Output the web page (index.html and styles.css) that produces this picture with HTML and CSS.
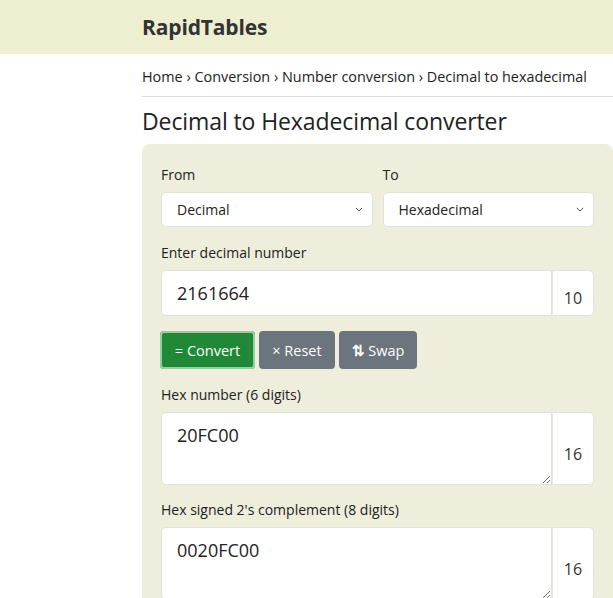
FILE: index.html
```html
<!DOCTYPE html>
<html lang="en">
<head>
<meta charset="utf-8">
<title>Decimal to Hexadecimal converter</title>
<link rel="stylesheet" href="styles.css">
</head>
<body>
<header class="topbar">
  <div class="logo">RapidTables</div>
</header>
<main class="page">
  <nav class="crumbs">Home <span class="sep">›</span> Conversion <span class="sep">›</span> Number conversion <span class="sep">›</span> Decimal to hexadecimal</nav>
  <hr class="rule">
  <h1 class="title">Decimal to Hexadecimal converter</h1>
  <section class="panel">
    <div class="row2">
      <div class="field">
        <label class="lbl">From</label>
        <div class="select">Decimal<svg class="chev" viewBox="0 0 10 6" width="8" height="5"><path d="M1 1l4 4 4-4" fill="none" stroke="#444" stroke-width="1.2"/></svg></div>
      </div>
      <div class="field">
        <label class="lbl">To</label>
        <div class="select">Hexadecimal<svg class="chev" viewBox="0 0 10 6" width="8" height="5"><path d="M1 1l4 4 4-4" fill="none" stroke="#444" stroke-width="1.2"/></svg></div>
      </div>
    </div>
    <div class="group">
      <label class="lbl">Enter decimal number</label>
      <div class="igroup">
        <div class="inp">2161664</div>
        <div class="addon">10</div>
      </div>
    </div>
    <div class="btns">
      <button class="btn btn-green">= Convert</button>
      <button class="btn btn-gray">× Reset</button>
      <button class="btn btn-gray"><span class="swapico">⇅</span> Swap</button>
    </div>
    <div class="group">
      <label class="lbl">Hex number (6 digits)</label>
      <div class="igroup tall">
        <textarea class="ta">20FC00</textarea>
        <div class="addon">16</div>
      </div>
    </div>
    <div class="group">
      <label class="lbl">Hex signed 2's complement (8 digits)</label>
      <div class="igroup tall">
        <textarea class="ta">0020FC00</textarea>
        <div class="addon">16</div>
      </div>
    </div>
  </section>
</main>
</body>
</html>
```
FILE: styles.css
```css
html, body {
  margin: 0;
  padding: 0;
  background: #fff;
  font-family: "Open Sans", "Noto Sans", "Liberation Sans", sans-serif;
  color: #222;
  overflow: hidden;
}
.topbar {
  height: 54px;
  background: #eeefd0;
  display: flex;
  align-items: center;
  padding-left: 142px;
}
.logo {
  font-size: 21px;
  font-weight: 700;
  color: #333;
  letter-spacing: -0.15px;
}
.page {
  margin-left: 142px;
}
.crumbs {
  font-size: 14.4px;
  line-height: 20px;
  padding-top: 13px;
  color: #222;
  white-space: nowrap;
}
.rule {
  border: 0;
  border-top: 1px solid #ddd;
  margin: 9px 0 0 0;
}
.title {
  font-size: 23px;
  font-weight: 400;
  line-height: 30px;
  margin: 9px 0 0 0;
  color: #222;
  letter-spacing: -0.1px;
  white-space: nowrap;
}
.panel {
  margin-top: 8px;
  background: #efeedc;
  border-radius: 8px 8px 0 0;
  padding: 20px 19px 0 19px;
  height: 460px;
}
.row2 {
  display: grid;
  grid-template-columns: 1fr 1fr;
  column-gap: 10px;
  margin-bottom: 15px;
}
.lbl {
  display: block;
  font-size: 14px;
  line-height: 22px;
  margin-bottom: 6px;
  color: #222;
}
.select {
  height: 35px;
  box-sizing: border-box;
  background: #fff;
  border: 1px solid #e2e2d8;
  border-radius: 5px;
  display: flex;
  align-items: center;
  justify-content: space-between;
  padding: 0 9px 0 15px;
  font-size: 14px;
}
.group { margin-bottom: 14px; }
.igroup {
  display: flex;
  height: 46px;
}
.igroup.tall { height: 73px; }
.inp, .ta {
  flex: 1;
  box-sizing: border-box;
  background: #fff;
  border: 1px solid #e2e2d8;
  border-radius: 5px 0 0 5px;
  font-family: inherit;
  color: #222;
  font-size: 18px;
  padding: 0 15px;
}
.inp {
  display: flex;
  align-items: center;
}
.ta {
  resize: vertical;
  padding-top: 10px;
  line-height: 24px;
  outline: none;
  margin: 0;
}
.addon {
  width: 42px;
  box-sizing: border-box;
  background: #fff;
  border: 1px solid #e2e2d8;
  border-left: 1px solid #e6e6e0;
  border-radius: 0 5px 5px 0;
  display: flex;
  align-items: center;
  justify-content: center;
  padding-top: 10px;
  font-size: 16px;
  color: #333;
}
.btns {
  display: flex;
  gap: 4px;
  margin-left: -1px;
  margin-top: 15px;
  margin-bottom: 15px;
}
.btn {
  height: 38px;
  border: 0;
  border-radius: 4px;
  color: #fff;
  font-family: inherit;
  font-size: 14.5px;
  padding: 0 12px;
}
.btn-green {
  background: #218838;
  box-shadow: 0 0 0 2px #8fd29c inset;
  padding: 0 14px;
  width: 95px;
}
.btn-gray {
  background: #6c757d;
}
.btn-gray:nth-child(2) { width: 76px; }
.btn-gray:nth-child(3) { width: 78px; }
.swapico { font-weight: 700; }
```
